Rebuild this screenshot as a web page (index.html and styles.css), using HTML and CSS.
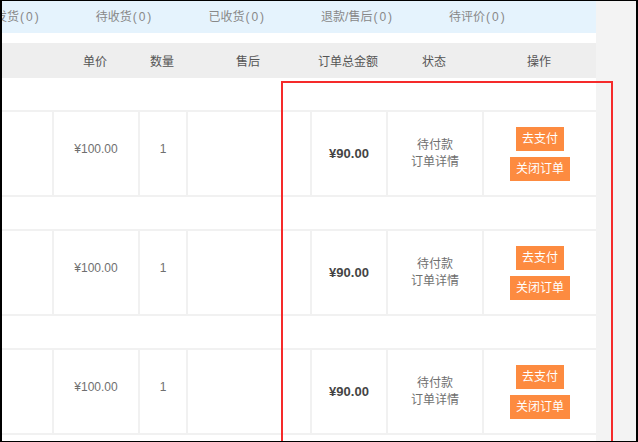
FILE: index.html
```html
<!DOCTYPE html>
<html lang="zh-CN">
<head>
    <meta charset="UTF-8">
    <meta name="viewport" content="width=device-width, initial-scale=1.0">
    <title>我的订单</title>
    <link rel="stylesheet" href="styles.css">
</head>
<body>
    <div class="screen">
        <div class="main">
            <div class="tabs">
                <span class="tab">待发货<span class="count">(0)</span></span>
                <span class="tab">待收货<span class="count">(0)</span></span>
                <span class="tab">已收货<span class="count">(0)</span></span>
                <span class="tab">退款/售后<span class="count">(0)</span></span>
                <span class="tab">待评价<span class="count">(0)</span></span>
            </div>

            <div class="thead cols">
                <div></div>
                <div>单价</div>
                <div>数量</div>
                <div>售后</div>
                <div>订单总金额</div>
                <div>状态</div>
                <div>操作</div>
            </div>

            <div class="order">
                <div class="order-head"></div>
                <div class="order-item cols">
                    <div class="cell"></div>
                    <div class="cell raised">¥100.00</div>
                    <div class="cell raised">1</div>
                    <div class="cell"></div>
                    <div class="cell total">¥90.00</div>
                    <div class="cell status">待付款<br>订单详情</div>
                    <div class="cell actions">
                        <button class="btn">去支付</button>
                        <button class="btn">关闭订单</button>
                    </div>
                </div>
            </div>

            <div class="order">
                <div class="order-head"></div>
                <div class="order-item cols">
                    <div class="cell"></div>
                    <div class="cell raised">¥100.00</div>
                    <div class="cell raised">1</div>
                    <div class="cell"></div>
                    <div class="cell total">¥90.00</div>
                    <div class="cell status">待付款<br>订单详情</div>
                    <div class="cell actions">
                        <button class="btn">去支付</button>
                        <button class="btn">关闭订单</button>
                    </div>
                </div>
            </div>

            <div class="order">
                <div class="order-head"></div>
                <div class="order-item cols">
                    <div class="cell"></div>
                    <div class="cell raised">¥100.00</div>
                    <div class="cell raised">1</div>
                    <div class="cell"></div>
                    <div class="cell total">¥90.00</div>
                    <div class="cell status">待付款<br>订单详情</div>
                    <div class="cell actions">
                        <button class="btn">去支付</button>
                        <button class="btn">关闭订单</button>
                    </div>
                </div>
            </div>
        </div>
        <div class="aside"></div>

        <!-- 标注框 -->
        <div class="mark"></div>
    </div>
</body>
</html>
```

FILE: styles.css
```css
html, body {
    margin: 0;
    background-color: #000;
}
.screen {
    position: relative;
    display: flex;
    height: 440px;
    margin: 1px 2px;
    overflow: hidden;
    background-color: #fff;
    font-family: "Liberation Sans", "Noto Sans CJK SC", sans-serif;
    font-size: 12px;
    color: #6f6f6f;
}
.main {
    width: 594px;
    flex-shrink: 0;
}
.aside {
    flex: 1;
    background-color: #f3f3f3;
}
.tabs {
    display: flex;
    align-items: center;
    gap: 55px;
    height: 29px;
    padding-bottom: 3px;
    background-color: #e5f3fd;
    color: #888;
    white-space: nowrap;
}
.tab:first-child {
    margin-left: -19px;
}
.count {
    letter-spacing: 2px;
    margin-left: 1px;
}
.thead {
    height: 35px;
    margin-top: 10px;
    background-color: #eee;
    color: #555;
}
.cols {
    display: grid;
    grid-template-columns: 50px 86px 48px 124px 76px 96px 114px;
}
.thead div {
    display: flex;
    align-items: center;
    justify-content: center;
}
.order-head {
    height: 32px;
    border-bottom: 2px solid #f1f1f1;
}
.order-item {
    height: 83px;
    border-bottom: 2px solid #f1f1f1;
}
.cell {
    display: flex;
    flex-direction: column;
    align-items: center;
    justify-content: center;
    text-align: center;
}
.cell + .cell {
    border-left: 2px solid #f1f1f1;
}
.raised {
    padding-bottom: 10px;
}
.total {
    font-size: 13px;
    font-weight: bold;
    color: #444;
}
.status {
    line-height: 17px;
}
.actions {
    gap: 6px;
}
.btn {
    height: 24px;
    padding: 0 6px;
    border: none;
    background-color: #fd8b40;
    color: #fff;
    font-family: inherit;
    font-size: 12px;
    line-height: 24px;
}
.mark {
    position: absolute;
    left: 279px;
    top: 80px;
    width: 328px;
    height: 400px;
    border: 2px solid #f52a2a;
}
```
